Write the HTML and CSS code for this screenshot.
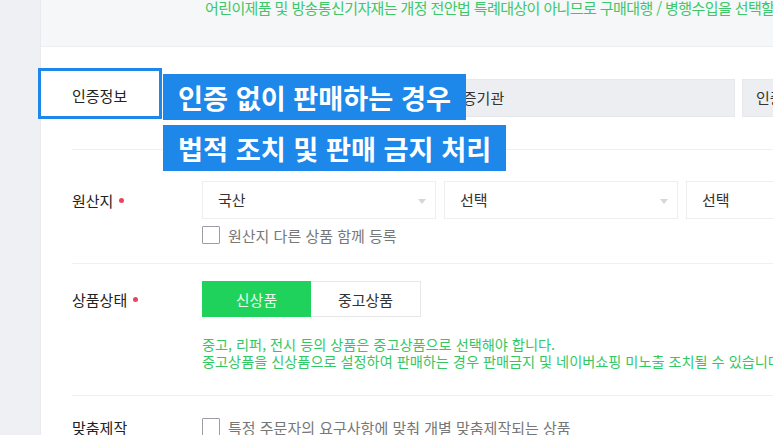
FILE: index.html
```html
<!DOCTYPE html>
<html lang="ko">
<head>
  <meta charset="UTF-8">
  <meta name="viewport" content="width=device-width, initial-scale=1.0">
  <title>상품 등록 - 인증정보</title>
  <link rel="stylesheet" href="styles.css">
</head>
<body>

  <div class="page">
    <aside class="side"></aside>

    <main class="main">
      <div class="notice">
        <p class="notice--text">어린이제품 및 방송통신기자재는 개정 전안법 특례대상이 아니므로 구매대행 / 병행수입을 선택할 수 없습니다.</p>
      </div>

      <div class="form">
        <!-- 인증정보 -->
        <div class="row row--cert">
          <div class="label label--mark">인증정보</div>
          <div class="field">
            <div class="inputs">
              <div class="input input--type">인증유형</div>
              <div class="input input--org">인증기관</div>
              <div class="input input--num">인증번호</div>
            </div>
          </div>
        </div>

        <!-- 원산지 -->
        <div class="row row--origin">
          <div class="label">원산지 <i class="req"></i></div>
          <div class="field">
            <div class="selects">
              <div class="select">국산</div>
              <div class="select">선택</div>
              <div class="select">선택</div>
            </div>
            <label class="check check--sub">
              <span class="check--box"></span>
              <span class="check--text">원산지 다른 상품 함께 등록</span>
            </label>
          </div>
        </div>

        <!-- 상품상태 -->
        <div class="row row--state">
          <div class="label label--toggle">상품상태 <i class="req"></i></div>
          <div class="field">
            <div class="toggle">
              <button type="button" class="toggle--btn is-on">신상품</button>
              <button type="button" class="toggle--btn">중고상품</button>
            </div>
            <p class="help">중고, 리퍼, 전시 등의 상품은 중고상품으로 선택해야 합니다.<br>중고상품을 신상품으로 설정하여 판매하는 경우 판매금지 및 네이버쇼핑 미노출 조치될 수 있습니다.</p>
          </div>
        </div>

        <!-- 맞춤제작 -->
        <div class="row row--custom">
          <div class="label label--check">맞춤제작</div>
          <div class="field">
            <label class="check">
              <span class="check--box"></span>
              <span class="check--text">특정 주문자의 요구사항에 맞춰 개별 맞춤제작되는 상품</span>
            </label>
          </div>
        </div>
      </div>
    </main>

    <!-- 자막 -->
    <div class="callout">
      <p class="callout--line">인증 없이 판매하는 경우</p>
      <p class="callout--line">법적 조치 및 판매 금지 처리</p>
    </div>
  </div>

</body>
</html>
```

FILE: styles.css
```css
html,body{margin: 0; padding: 0; background-color: #fff; overflow: hidden; height: 100%; width: 100%;}
*, *::before, *::after{box-sizing: border-box;}
body{
  font-family: "Noto Sans CJK KR", "Noto Sans", sans-serif;
  font-size: 15px;
  color: #222;
}
p{margin: 0;}

.page{
  position: relative;
  display: flex;
  width: 773px;
  height: 435px;
  overflow: hidden;
}
.side{
  flex: none;
  width: 40px;
  background-color: #eef0f3;
}
.main{
  flex: 1;
  min-width: 0;
  border-left: 1px solid #e8eaed;
  white-space: nowrap;
}

/* 상단 안내 */
.notice{
  height: 49px;
  background-color: #f6f7f9;
  border-bottom: 1px solid #eceef1;
  padding-left: 164px;
}
.notice--text{
  margin-top: -2px;
  line-height: 20px;
  font-size: 15px;
  letter-spacing: -0.6px;
  color: #3cc868;
}

/* 폼 */
.form{padding-left: 31px;}
.row{
  display: flex;
  align-items: flex-start;
  border-bottom: 1px solid #eef0f3;
}
.label{
  flex: none;
  width: 130px;
  height: 38px;
  display: flex;
  align-items: center;
  gap: 6px;
}
.field{flex: 1; min-width: 0;}
.req{
  display: block;
  width: 5px;
  height: 5px;
  border-radius: 50%;
  background-color: #e8455b;
}

.row--cert{padding: 32px 0;}
.label--mark{
  position: relative;
  z-index: 2;
  height: 32px;
}
.label--mark::before{
  content: "";
  position: absolute;
  z-index: -1;
  left: -34px;
  top: -11px;
  width: 124px;
  height: 51px;
  border: 3px solid #1d87ea;
  background-color: #fff;
}
.inputs{display: flex; gap: 7px;}
.input{
  flex: none;
  height: 38px;
  line-height: 36px;
  padding: 0 13px;
  background-color: #eceef2;
  border: 1px solid #e6e8ec;
  color: #333;
}
.input--type{width: 226px;}
.input--org{width: 300px;}
.input--num{width: 300px;}

.row--origin{padding: 31px 0 19px;}
.selects{display: flex; gap: 8px;}
.select{
  position: relative;
  flex: none;
  width: 234px;
  height: 38px;
  line-height: 36px;
  padding: 0 15px;
  border: 1px solid #eceef1;
  color: #333;
}
.select::after{
  content: "";
  position: absolute;
  right: 9px;
  top: 17px;
  border-top: 5px solid #d4d6da;
  border-left: 4.5px solid transparent;
  border-right: 4.5px solid transparent;
}

.check{
  display: flex;
  align-items: center;
  gap: 8px;
  height: 18px;
}
.check--sub{margin-top: 7px;}
.check--box{
  flex: none;
  width: 18px;
  height: 18px;
  border: 1px solid #9a9da3;
  border-radius: 1px;
  background-color: #fff;
}
.check--text{color: #777;}

.row--state{padding: 17px 0 25px;}
.label--toggle{height: 36px;}
.toggle{display: flex;}
.toggle--btn{
  width: 110px;
  height: 36px;
  padding: 0;
  font: inherit;
  color: #333;
  background-color: #fff;
  border: 1px solid #e5e7ea;
}
.toggle--btn + .toggle--btn{border-left: 0;}
.toggle--btn.is-on{
  width: 109px;
  color: #e6fbec;
  background-color: #1fd25b;
  border-color: #1fd25b;
}
.help{
  margin-top: 19px;
  line-height: 17px;
  font-size: 14.2px;
  color: #33c764;
}

.row--custom{padding: 22px 0 20px;}
.label--check{height: 18px;}

/* 자막 오버레이 */
.callout{
  position: absolute;
  left: 163px;
  top: 74px;
  z-index: 10;
  display: flex;
  flex-direction: column;
  align-items: flex-start;
  gap: 5px;
}
.callout--line{
  padding: 0 15px;
  line-height: 46px;
  font-size: 27.2px;
  font-weight: 700;
  color: #fff;
  background-color: #1d87ea;
  white-space: nowrap;
}
```
